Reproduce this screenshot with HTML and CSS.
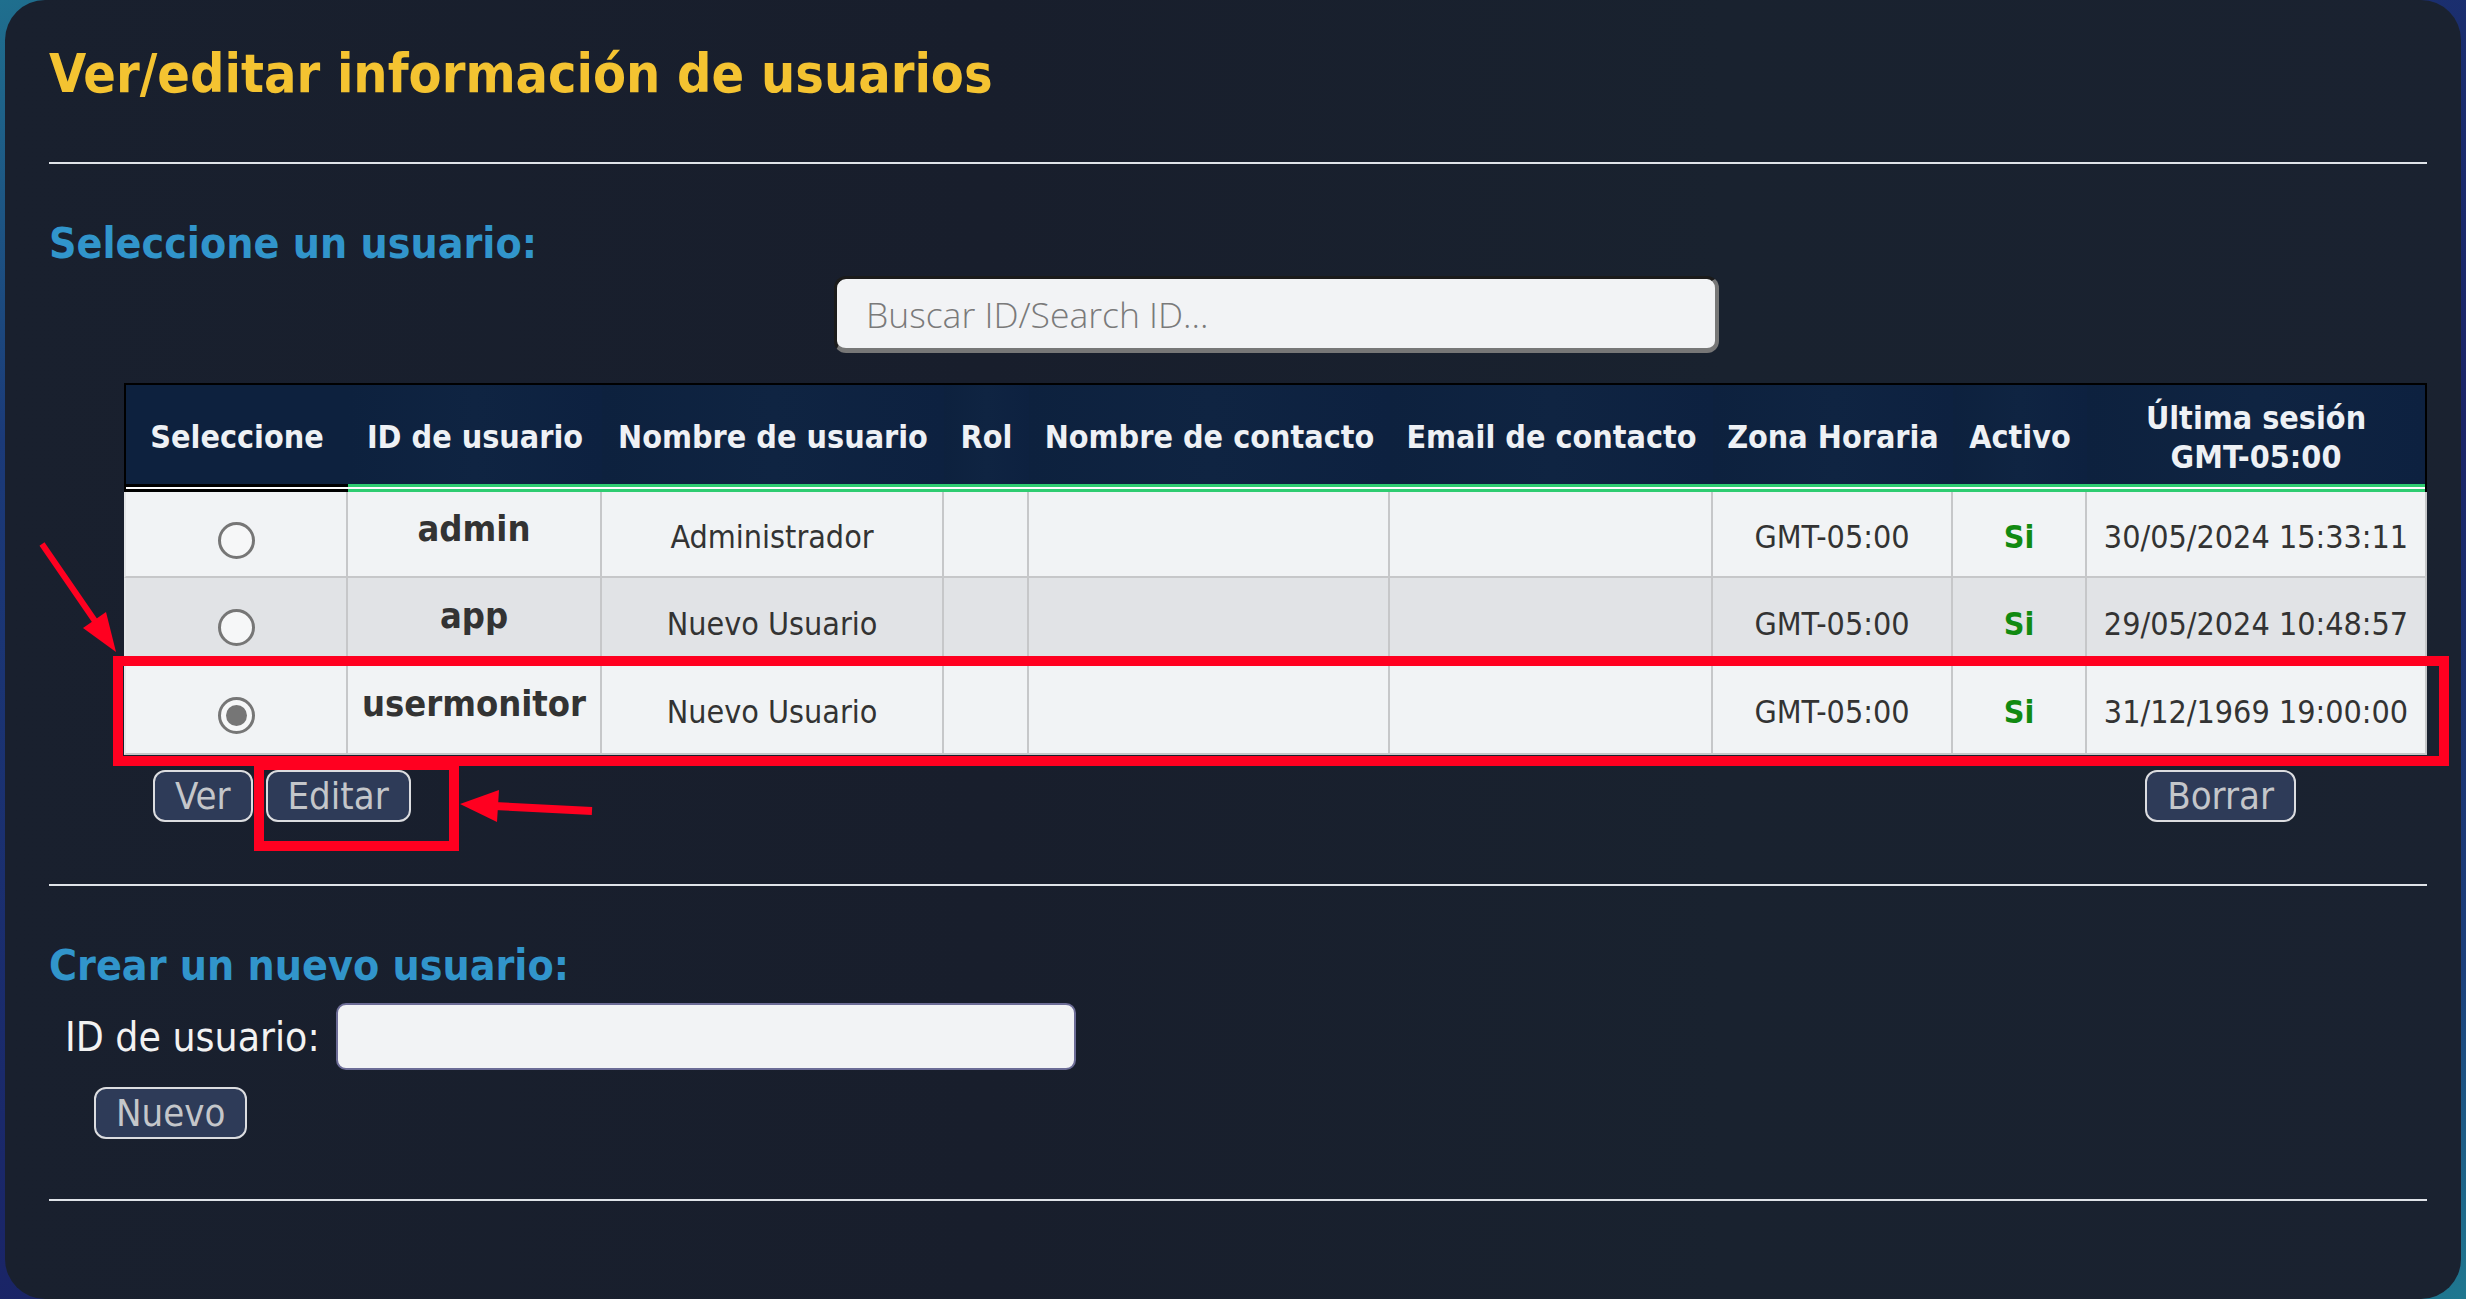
FILE: index.html
```html
<!DOCTYPE html>
<html lang="es">
<head>
<meta charset="utf-8">
<title>Ver/editar información de usuarios</title>
<link rel="stylesheet" href="styles.css">
</head>
<body>
<div class="panel">
  <h1 class="title">Ver/editar información de usuarios</h1>
  <hr class="rule rule-top">
  <h2 class="section">Seleccione un usuario:</h2>
  <div class="search-row"><input class="search" type="text" placeholder="Buscar ID/Search ID..."></div>
  <table class="users">
    <colgroup>
      <col style="width:224px"><col style="width:254px"><col style="width:342px"><col style="width:85px"><col style="width:361px"><col style="width:323px"><col style="width:240px"><col style="width:134px"><col style="width:340px">
    </colgroup>
    <thead>
      <tr class="hrow">
        <th class="first">Seleccione</th>
        <th>ID de usuario</th>
        <th>Nombre de usuario</th>
        <th>Rol</th>
        <th>Nombre de contacto</th>
        <th>Email de contacto</th>
        <th>Zona Horaria</th>
        <th>Activo</th>
        <th class="last">Última sesión<br>GMT-05:00</th>
      </tr>
    </thead>
    <tbody>
      <tr class="r1 odd">
        <td class="sel"><span class="radio"></span></td>
        <td class="uid">admin</td>
        <td>Administrador</td>
        <td></td><td></td><td></td>
        <td>GMT-05:00</td>
        <td class="yes">Si</td>
        <td>30/05/2024 15:33:11</td>
      </tr>
      <tr class="r2 even">
        <td class="sel"><span class="radio"></span></td>
        <td class="uid">app</td>
        <td>Nuevo Usuario</td>
        <td></td><td></td><td></td>
        <td>GMT-05:00</td>
        <td class="yes">Si</td>
        <td>29/05/2024 10:48:57</td>
      </tr>
      <tr class="r3 odd">
        <td class="sel"><span class="radio checked"></span></td>
        <td class="uid">usermonitor</td>
        <td>Nuevo Usuario</td>
        <td></td><td></td><td></td>
        <td>GMT-05:00</td>
        <td class="yes">Si</td>
        <td>31/12/1969 19:00:00</td>
      </tr>
    </tbody>
  </table>
  <div class="actions">
    <button class="btn btn-ver">Ver</button>
    <button class="btn btn-edit">Editar</button>
    <button class="btn btn-del">Borrar</button>
  </div>
  <hr class="rule rule-mid">
  <h2 class="section">Crear un nuevo usuario:</h2>
  <div class="new-row">
    <label class="new-label">ID de usuario:</label>
    <input class="new-id" type="text">
  </div>
  <div class="new-actions"><button class="btn">Nuevo</button></div>
  <hr class="rule rule-bottom">
</div>
<svg class="annot" width="2466" height="1299" viewBox="0 0 2466 1299">
  <rect x="118" y="661" width="2326" height="100" fill="none" stroke="#ff0020" stroke-width="10"/>
  <rect x="259" y="765" width="195" height="81" fill="none" stroke="#ff0020" stroke-width="10"/>
  <line x1="42" y1="544" x2="97" y2="624" stroke="#ff0020" stroke-width="6"/>
  <polygon points="116,652 106,612 83,628" fill="#ff0020"/>
  <line x1="592" y1="811" x2="494" y2="806" stroke="#ff0020" stroke-width="8"/>
  <polygon points="460,804 499,790 497,822" fill="#ff0020"/>
</svg>
</body>
</html>
```
FILE: styles.css
```css
html, body {
  margin: 0;
  padding: 0;
}
body {
  width: 2466px;
  height: 1299px;
  overflow: hidden;
  position: relative;
  background: linear-gradient(160deg, #1f6f8e 0%, #1b3a78 20%, #1a2466 60%, #1b3f7a 85%, #1f7890 100%);
  font-family: "DejaVu Sans Condensed", "DejaVu Sans", sans-serif;
  font-stretch: condensed;
}
.panel {
  margin-left: 5px;
  width: 2456px;
  height: 1299px;
  box-sizing: border-box;
  border-radius: 40px;
  background: linear-gradient(90deg, #19202e 0%, #181e2c 40%, #19222f 70%, #1a2230 100%);
  padding: 44px 34px 0 44px;
}
.title {
  margin: 0;
  font-size: 53.5px;
  line-height: 60px;
  font-weight: bold;
  color: #f4c331;
}
.rule {
  border: none;
  height: 2px;
  background: #dfe3e8;
  margin: 0;
}
.rule-top { margin-top: 58px; }
.section {
  margin: 56px 0 0;
  font-size: 42.5px;
  line-height: 48px;
  font-weight: bold;
  color: #3195cb;
}
.search-row {
  margin-top: 8px;
  padding-left: 785px;
}
.search {
  display: block;
  box-sizing: border-box;
  width: 885px;
  height: 77px;
  margin: 0;
  border-style: solid;
  border-width: 3px 4px 5px 3px;
  border-color: #1b1b1b #777777 #777777 #1b1b1b;
  border-radius: 12px;
  background: #f2f3f5;
  padding: 0 0 0 29px;
  font-family: "Open Sans", sans-serif;
  font-weight: 300;
  font-size: 35.5px;
  color: #555;
  outline: none;
}
.search::placeholder { color: #7a7a7a; }
.users {
  margin: 30px 0 0 75px;
  width: 2303px;
  table-layout: fixed;
  border-collapse: separate;
  border-spacing: 0;
}
.users tr.hrow { height: 109px; }
.users th {
  padding: 6px 2px 8px;
  border-top: 2px solid #000;
  color: #eef1f5;
  font-size: 32px;
  line-height: 39px;
  font-weight: bold;
  text-align: center;
  vertical-align: middle;
  white-space: nowrap;
  background: linear-gradient(to top, #2ecc71 0 3px, #ffffff 3px 5px, #2ecc71 5px 8px, transparent 8px), linear-gradient(90deg, #0d213e, #0f2442 50%, #0d2140);
}
.users th.first {
  border-left: 2px solid #000;
  background: linear-gradient(to top, #000 0 3px, #ffffff 3px 5px, #000 5px 8px, transparent 8px), #0d213e;
}
.users th.last { border-right: 2px solid #000; }
.users td {
  padding: 5px 4px 0;
  border-right: 2px solid #c6c7c9;
  border-bottom: 2px solid #c6c7c9;
  color: #333;
  font-size: 32px;
  text-align: center;
  vertical-align: middle;
  white-space: nowrap;
}
.users td:first-child { border-left: 2px solid #e4e6e8; }
.users tr.odd td { background: #f1f3f5; }
.users tr.even td { background: #e1e3e6; }
.users tr.r1 { height: 86px; }
.users tr.r2 { height: 88px; }
.users tr.r3 { height: 89px; }
.users td.uid {
  font-weight: bold;
  font-size: 36px;
  padding-top: 0;
  padding-bottom: 12px;
}
.users td.yes {
  color: #118a11;
  font-weight: bold;
}
.users td.sel { padding-top: 10px; }
.radio {
  display: inline-block;
  box-sizing: border-box;
  width: 37px;
  height: 37px;
  border: 3px solid #767676;
  border-radius: 50%;
  background: #f6f7f8;
  vertical-align: middle;
  position: relative;
}
.radio.checked::after {
  content: "";
  position: absolute;
  left: 5px;
  top: 5px;
  width: 21px;
  height: 21px;
  border-radius: 50%;
  background: #767676;
}
.actions {
  display: flex;
  margin-top: 15px;
  padding-left: 104px;
  padding-right: 131px;
}
.btn {
  box-sizing: border-box;
  height: 52px;
  padding: 0 20px;
  border: 2px solid #dcdde0;
  border-radius: 12px;
  background: #2e3b58;
  color: #c4c6ca;
  font-family: "DejaVu Sans Condensed", "DejaVu Sans", sans-serif;
  font-stretch: condensed;
  font-size: 38px;
  line-height: 48px;
}
.btn-edit { margin-left: 13px; }
.btn-del { margin-left: auto; }
.rule-mid { margin-top: 62px; }
.new-row {
  display: flex;
  align-items: center;
  margin-top: 13px;
  padding-left: 16px;
}
.new-label {
  color: #f2f2f2;
  font-size: 40.5px;
  width: 271px;
}
.new-id {
  box-sizing: border-box;
  width: 740px;
  height: 67px;
  margin: 0;
  border: 2px solid #6c6c96;
  border-radius: 10px;
  background: #f2f3f5;
  outline: none;
}
.new-actions {
  margin-top: 17px;
  padding-left: 45px;
}
.rule-bottom { margin-top: 60px; }
.annot {
  position: absolute;
  left: 0;
  top: 0;
  pointer-events: none;
}
```
